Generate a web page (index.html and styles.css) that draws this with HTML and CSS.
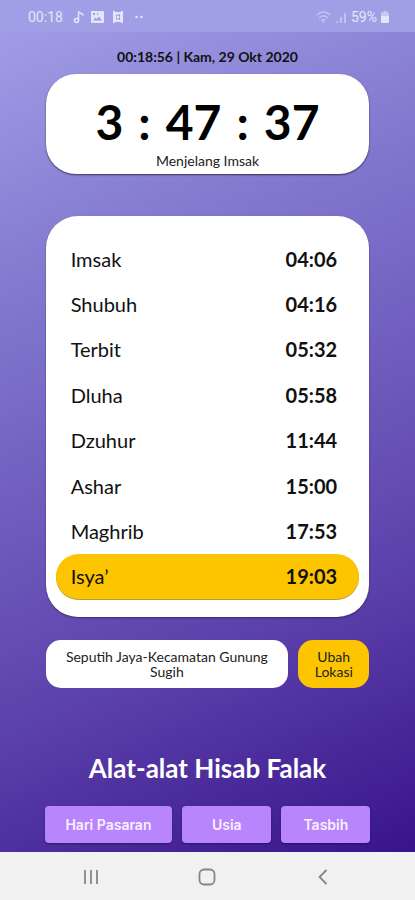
FILE: index.html
```html
<!DOCTYPE html>
<html lang="id">
<head>
<meta charset="utf-8">
<meta name="viewport" content="width=device-width, initial-scale=1">
<title>Jadwal Sholat</title>
<link rel="stylesheet" href="styles.css">
</head>
<body>
<header class="status">
  <div class="status-group">
    <span class="clock">00:18</span>
    <svg width="12" height="14" viewBox="0 0 12 14" fill="none" stroke="currentColor" stroke-width="1.5"><circle cx="3.5" cy="10.5" r="2"/><path d="M5.5 10.500V1.500c1 2 4 1.500 5 4"/></svg>
    <svg width="13" height="12" viewBox="0 0 13 12"><path fill="currentColor" fill-rule="evenodd" d="M1 0h11a1 1 0 0 1 1 1v10a1 1 0 0 1-1 1H1a1 1 0 0 1-1-1V1a1 1 0 0 1 1-1zm1 9.500h9L8 5.500 6 8 4.500 6.500zM2 2v2h2V2zm4 0v2h1V2z"/></svg>
    <svg class="note" width="10" height="12" viewBox="0 0 10 12"><path fill="currentColor" fill-rule="evenodd" d="M0 0h2v1h6V0h2v12H8v-1H2v1H0zm3 4v4l4 1V3z"/><circle cx="5" cy="6" r="1.500" fill="currentColor"/></svg>
    <svg class="dots" width="9" height="4" viewBox="0 0 9 4" fill="currentColor"><circle cx="1.500" cy="2" r="1.200"/><circle cx="6.500" cy="2" r="1.200"/></svg>
  </div>
  <div class="status-group status-right">
    <svg class="faint" width="15" height="13" viewBox="0 0 15 13" fill="none" stroke="currentColor" stroke-width="1.500"><path d="M1 4c4-4 9-4 13 0M3 7c3-3 6-3 9 0M5.500 9.500c1-1 3-1 4 0"/><path d="M7.500 10v2"/></svg>
    <svg class="faint" width="12" height="13" viewBox="0 0 12 13" fill="currentColor"><path d="M0 12l3-3v3zM5 7l2-2v7H5zM9 3l2-2v11H9z"/></svg>
    <span class="battery">59%</span>
    <svg width="8" height="12" viewBox="0 0 8 12" fill="currentColor"><path opacity=".6" d="M2.500 0h3v1.500H8V5H0V1.500h2.500z"/><path d="M0 5h8v6a1 1 0 0 1-1 1H1a1 1 0 0 1-1-1z"/></svg>
  </div>
</header>
<main class="content">
  <p class="date">00:18:56 | Kam, 29 Okt 2020</p>
  <section class="countdown">
    <div class="timer"><span>3</span> <span>:</span> <span>47</span> <span>:</span> <span>37</span></div>
    <p class="until">Menjelang Imsak</p>
  </section>
  <section class="schedule">
    <table class="times">
      <tbody>
        <tr><th scope="row">Imsak</th><td>04:06</td></tr>
        <tr><th scope="row">Shubuh</th><td>04:16</td></tr>
        <tr><th scope="row">Terbit</th><td>05:32</td></tr>
        <tr><th scope="row">Dluha</th><td>05:58</td></tr>
        <tr><th scope="row">Dzuhur</th><td>11:44</td></tr>
        <tr><th scope="row">Ashar</th><td>15:00</td></tr>
        <tr><th scope="row">Maghrib</th><td>17:53</td></tr>
        <tr class="current"><th scope="row">Isya’</th><td>19:03</td></tr>
      </tbody>
    </table>
  </section>
  <section class="location">
    <p class="place">Seputih Jaya-Kecamatan Gunung Sugih</p>
    <button class="change" type="button">Ubah Lokasi</button>
  </section>
  <h1 class="title">Alat-alat Hisab Falak</h1>
  <div class="tools">
    <button class="tool wide" type="button">Hari Pasaran</button>
    <button class="tool" type="button">Usia</button>
    <button class="tool" type="button">Tasbih</button>
  </div>
</main>
<nav class="navbar">
  <button class="nav" type="button" aria-label="Recents"><svg width="18" height="18" viewBox="0 0 18 18" stroke="currentColor" stroke-width="1.800"><path d="M3 2v14M9 2v14M15 2v14"/></svg></button>
  <button class="nav" type="button" aria-label="Home"><svg width="18" height="18" viewBox="0 0 18 18" fill="none" stroke="currentColor" stroke-width="1.800"><rect x="1.500" y="1.500" width="15" height="15" rx="4.500"/></svg></button>
  <button class="nav" type="button" aria-label="Back"><svg width="18" height="18" viewBox="0 0 18 18" fill="none" stroke="currentColor" stroke-width="1.800"><path d="M12.500 2L5.500 9l7 7"/></svg></button>
</nav>
</body>
</html>
```
FILE: styles.css
```css
* { box-sizing: border-box; }
body {
  margin: 0;
  min-height: 100vh;
  display: flex;
  flex-direction: column;
  font-family: Lato, sans-serif;
  color: #111;
  background: linear-gradient(157deg, #a3a1e8 0%, #8278cf 28%, #5c42ac 68%, #38138a 96%);
}
p, h1 { margin: 0; }
button { border: 0; padding: 0; font: inherit; color: inherit; }

.status {
  height: 32px;
  padding: 2px 26px 0 28px;
  display: flex;
  justify-content: space-between;
  align-items: center;
  font-family: Roboto, sans-serif;
  font-size: 14px;
  color: #e6e4fa;
  background: #a09fe6;
}
.status-group { display: flex; align-items: center; gap: 6px; }
.status-right { gap: 4px; }
.clock { margin-right: 4px; }
.note { margin-left: 3px; }
.dots { margin-left: 6px; }
.faint { opacity: .5; }

.content {
  flex: 1;
  padding: 16px 11% 9px;
  display: flex;
  flex-direction: column;
}
.date {
  font-size: 14px;
  line-height: 18px;
  font-weight: 700;
  text-align: center;
}
.countdown {
  margin-top: 8px;
  padding: 18px 16px 4px;
  border-radius: 30px;
  background: #fff;
  text-align: center;
  box-shadow: 0 1px 2px rgba(0, 0, 0, .6);
}
.timer {
  display: flex;
  justify-content: center;
  gap: 15px;
  font-size: 48px;
  line-height: 60px;
  font-weight: 700;
  color: #000;
}
.until { font-size: 14px; line-height: 18px; color: #222; }

.schedule {
  margin-top: 42px;
  padding: 20px 10px 18px;
  border-radius: 32px;
  background: #fff;
  box-shadow: 0 1px 2px rgba(0, 0, 0, .4);
}
.times {
  width: 100%;
  height: 363px;
  border-collapse: separate;
  border-spacing: 0;
  font-size: 20px;
  line-height: 24px;
}
.times th { padding: 0 0 0 15px; text-align: left; font-weight: 400; }
.times td { width: 96px; padding: 0; text-align: center; font-weight: 700; }
.current th, .current td { background: #fdc500; box-shadow: 0 1px 0 #b59a45; }
.current th { border-radius: 23px 0 0 23px; }
.current td { border-radius: 0 23px 23px 0; }

.location { margin-top: 23px; display: flex; gap: 10px; }
.place, .change {
  min-height: 48px;
  display: flex;
  align-items: center;
  justify-content: center;
  border-radius: 15px;
  font-size: 14px;
  line-height: 15px;
  text-align: center;
  color: #222;
}
.place { flex: 1; padding: 0 14px; background: #fff; }
.change { width: 22%; padding: 0 12px; background: #fdc500; }

.title {
  margin-top: 64px;
  font-size: 26px;
  line-height: 32px;
  font-weight: 700;
  text-align: center;
  color: #fff;
}
.tools { margin: 22px -1px 0; display: flex; gap: 10px; }
.tool {
  flex: 90;
  height: 37px;
  border-radius: 4px;
  background: #b985fc;
  color: #f8f0ff;
  font-family: Inter, sans-serif;
  font-size: 14px;
  font-weight: 600;
  box-shadow: 0 1px 2px rgba(0, 0, 0, .4);
}
.tool.wide { flex: 129; }

.navbar {
  height: 48px;
  padding: 2px 34px 0 33px;
  display: flex;
  justify-content: space-between;
  align-items: center;
  color: #858585;
  background: #f1f1f1;
}
.nav { flex: 1; height: 32px; display: grid; place-items: center; background: none; }
```
